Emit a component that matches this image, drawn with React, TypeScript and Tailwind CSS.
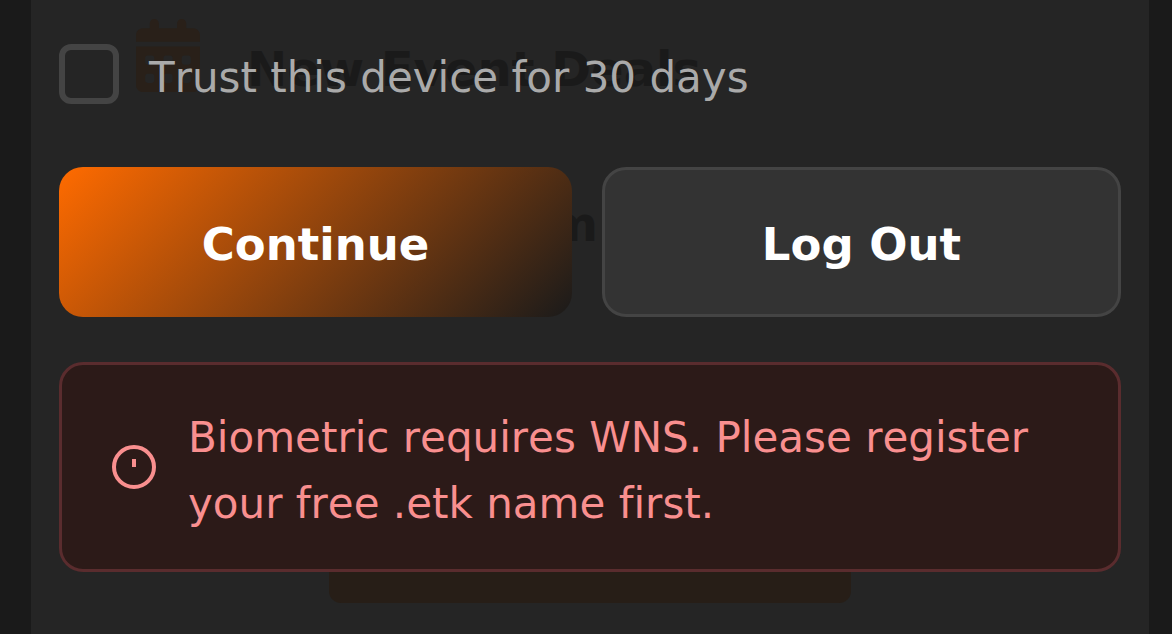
import { FaCalendarDays } from "react-icons/fa6";

function PageBehind() {
  return (
    <div aria-hidden="true" className="absolute inset-0 overflow-hidden font-bold text-[#1a1a1a]">
      <div className="absolute left-[105px] top-[19px] flex items-start gap-[47px]">
        <FaCalendarDays className="h-[73px] w-16 text-[#292019]" />
        <span className="text-[48px] leading-[100px]">New Event Deals</span>
      </div>
      <span className="absolute left-[517px] top-[190px] text-[48px] leading-[68px]">m</span>
      <div className="absolute bottom-[31px] left-[298px] h-[100px] w-[522px] rounded-xl bg-[#271e17]" />
    </div>
  );
}

function AlertIcon() {
  return (
    <svg viewBox="0 0 24 24" fill="none" stroke="currentColor" strokeWidth="2" className="size-12 shrink-0" aria-hidden="true">
      <circle cx="12" cy="12" r="10" />
      <path d="M12 8v4" />
    </svg>
  );
}

export default function App() {
  return (
    <div className="min-h-screen bg-[#1a1a1a] pl-[31px] pr-[23px] font-['DejaVu_Sans',sans-serif] [font-kerning:none] [font-variant-ligatures:none]">
      <main className="relative flex min-h-screen flex-col bg-[#252525] px-7 pt-[37px]">
        <PageBehind />
        <form className="relative flex flex-col" onSubmit={(e) => e.preventDefault()}>
          <label htmlFor="trust" className="flex items-center gap-[30px] text-[42px] leading-[66px] text-[#aaaaaa]">
            <input
              id="trust"
              type="checkbox"
              className="size-[60px] shrink-0 appearance-none rounded-xl border-6 border-[#444444] checked:bg-[#ff6b00]"
            />
            <span className="pt-2">Trust this device for 30 days</span>
          </label>
          <div className="mt-14 flex gap-[30px] text-[45px] font-bold text-white">
            <button
              type="submit"
              className="h-[150px] flex-1 rounded-3xl bg-[linear-gradient(135deg,#ff6b00_0%,#1a1a1a_100%)] pt-1.5"
            >
              Continue
            </button>
            <button type="button" className="h-[150px] flex-1 rounded-3xl border-3 border-[#444444] bg-[#333333] pt-1.5">
              Log Out
            </button>
          </div>
          <div
            role="alert"
            className="mt-[45px] flex items-center gap-[30px] rounded-3xl border-3 border-[#5a2c2e] bg-[#2c1a18] px-12 py-8 text-[42px] leading-[66px] text-[#f98f8f]"
          >
            <AlertIcon />
            <p className="pt-2">Biometric requires WNS. Please register your free .etk name first.</p>
          </div>
        </form>
      </main>
    </div>
  );
}
